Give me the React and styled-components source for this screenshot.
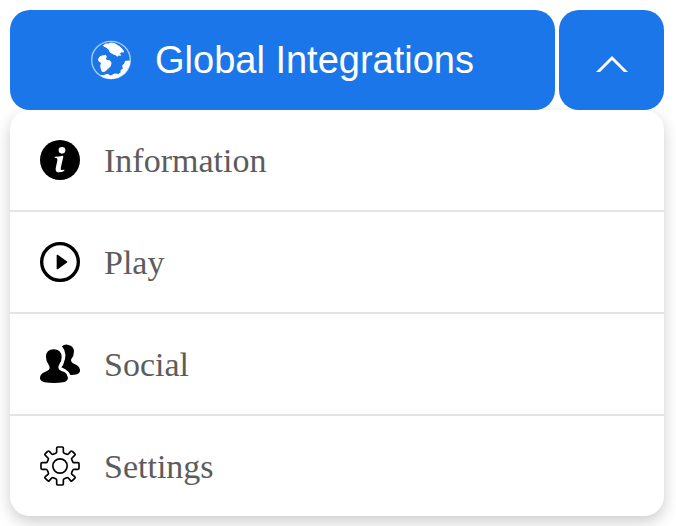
import React, { useState } from "react";
import styled, { createGlobalStyle } from "styled-components";

const GlobalStyle = createGlobalStyle`
  *, *::before, *::after { box-sizing: border-box; }
  body { margin: 0; background: #fff; overflow-x: hidden; }
`;

const Page = styled.main`
  padding: 10px 12px 10px 10px;
`;

const Bar = styled.div`
  display: flex;
  gap: 4px;
  height: 100px;
`;

const BlueButton = styled.button`
  display: flex;
  align-items: center;
  justify-content: center;
  gap: 24px;
  margin: 0;
  padding: 0;
  border: 0;
  border-radius: 20px;
  background: #1b76e9;
  color: #fff;
  font-family: "Liberation Sans", Arial, sans-serif;
  font-size: 38px;
  line-height: 44px;
  white-space: nowrap;
  cursor: pointer;
`;

const MainButton = styled(BlueButton)`
  flex: 1;
  min-width: 0;
`;

const ToggleButton = styled(BlueButton)`
  flex: 0 0 105px;
  padding-top: 8px;
`;

const Menu = styled.ul`
  margin: 0;
  padding: 0;
  list-style: none;
  border-radius: 20px;
  background: #fff;
  box-shadow: 0 6px 16px rgba(0, 0, 0, 0.2);
`;

const MenuItem = styled.li`
  & + & {
    border-top: 2px solid #e4e4e4;
  }
`;

const MenuButton = styled.button`
  display: flex;
  align-items: center;
  gap: 24px;
  width: 100%;
  height: 100px;
  margin: 0;
  padding: 0 30px;
  border: 0;
  background: none;
  color: #5c5c5c;
  font-family: "Liberation Serif", "Times New Roman", serif;
  font-size: 34px;
  line-height: 40px;
  text-align: left;
  cursor: pointer;
`;

const MenuLabel = styled.span`
  padding-top: 2px;
`;

const Icon = styled.svg`
  display: block;
  flex: none;
  width: 40px;
  height: 40px;
`;

const Chevron = styled.svg`
  display: block;
  width: 32px;
  height: 16px;
  transform: ${(p) => (p.$open ? "none" : "rotate(180deg)")};
`;

const GlobeIcon = () => (
  <Icon viewBox="0 0 120 120" aria-hidden="true">
    <ellipse cx="60" cy="60" rx="58" ry="56" fill="none" stroke="#a9cdf8" strokeWidth="4" />
    <g fill="#fff" stroke="#fff" strokeWidth="3" strokeLinejoin="round">
      <path d="M37 17L44 12L53 12L59 9L71 11L79 16L87 21L95 29L98 36L91 36L85 41L89 46L83 45L79 49L73 44L65 41L57 36L54 28L46 22Z" />
      <path d="M23 57L27 50L37 47L44 46L46 51L42 57L48 61L57 63L60 69L58 79L51 85L43 93L34 95L31 88L29 77L32 68L24 64Z" />
      <path d="M117 63Q115 83 101 99Q84 114 61 116Q40 114 30 106L37 107L49 103L59 108L71 102L83 103L90 98L90 91L97 87L95 76L101 72L103 64Z" />
    </g>
  </Icon>
);

const InfoIcon = () => (
  <Icon viewBox="0 0 120 120" aria-hidden="true">
    <circle cx="60" cy="60" r="60" fill="#000" />
    <circle cx="66" cy="31" r="10" fill="#fff" />
    <path
      d="M44 50Q57 50 69 47L70 50L63 80Q61 90 65 90L73 89V92Q67 97 57 97Q46 97 47 86Q48 79 52 62Q53 54 49 54L44 53Z"
      fill="#fff"
    />
  </Icon>
);

const PlayIcon = () => (
  <Icon viewBox="0 0 120 120" aria-hidden="true">
    <circle cx="60" cy="60" r="55" fill="none" stroke="#000" strokeWidth="10" />
    <path d="M52 40L80 60L52 80Z" fill="#000" stroke="#000" strokeWidth="4" strokeLinejoin="round" />
  </Icon>
);

const SocialIcon = () => (
  <Icon viewBox="0 0 120 120" aria-hidden="true">
    <path d="M66 7Q72 1 82 2Q101 4 102 22Q102 36 94 45Q91 53 99 58L111 64Q121 70 120 81Q119 90 104 92L91 93Q86 82 76 76L64 70Q71 63 72 54Q77 43 76 31Q75 18 66 7Z" />
    <path d="M41 16Q64 16 65 39Q65 51 58 61Q55 66 55 72Q56 77 63 80L74 85Q83 90 84 101Q84 111 69 115Q57 117 42 117Q27 117 14 115Q0 111 0 103Q0 91 10 86L21 81Q28 78 29 73Q30 67 25 61Q18 51 18 39Q18 16 41 16Z" />
  </Icon>
);

const SettingsIcon = () => (
  <Icon viewBox="0 0 120 120" fill="none" stroke="#000" strokeWidth="5" strokeLinejoin="round" aria-hidden="true">
    <circle cx="60" cy="60" r="21.5" />
    <path d="M53 3H67Q70 3 70 6V18Q70 21 73 22L80 25Q83 26 85 24L92 16Q94 14 97 16L104 23Q107 26 104 28L96 36Q94 38 95 40L98 47Q99 50 102 50H114Q117 50 117 53V67Q117 70 114 70H102Q99 70 98 73L95 80Q94 83 96 85L104 92Q107 94 104 97L97 104Q94 107 92 104L85 96Q83 94 80 95L73 98Q70 99 70 102V114Q70 117 67 117H53Q50 117 50 114V102Q50 99 47 98L40 95Q37 94 35 96L28 104Q26 107 23 104L16 97Q13 94 16 92L24 85Q26 83 25 80L22 73Q21 70 18 70H6Q3 70 3 67V53Q3 50 6 50H18Q21 50 22 47L25 40Q26 38 24 36L16 28Q13 26 16 23L23 16Q26 14 28 16L35 24Q37 26 40 25L47 22Q50 21 50 18V6Q50 3 53 3Z" />
  </Icon>
);

const items = [
  { label: "Information", Glyph: InfoIcon },
  { label: "Play", Glyph: PlayIcon },
  { label: "Social", Glyph: SocialIcon },
  { label: "Settings", Glyph: SettingsIcon },
];

export default function App() {
  const [open, setOpen] = useState(true);

  return (
    <>
      <GlobalStyle />
      <Page>
        <Bar>
          <MainButton type="button">
            <GlobeIcon />
            <span>Global Integrations</span>
          </MainButton>
          <ToggleButton
            type="button"
            aria-label="Toggle menu"
            aria-expanded={open}
            onClick={() => setOpen(!open)}
          >
            <Chevron $open={open} viewBox="0 0 32 16" aria-hidden="true">
              <path d="M0 16L16 0L32 16H28L16 4L4 16Z" fill="#fff" />
            </Chevron>
          </ToggleButton>
        </Bar>
        {open && (
          <Menu>
            {items.map(({ label, Glyph }) => (
              <MenuItem key={label}>
                <MenuButton type="button">
                  <Glyph />
                  <MenuLabel>{label}</MenuLabel>
                </MenuButton>
              </MenuItem>
            ))}
          </Menu>
        )}
      </Page>
    </>
  );
}
